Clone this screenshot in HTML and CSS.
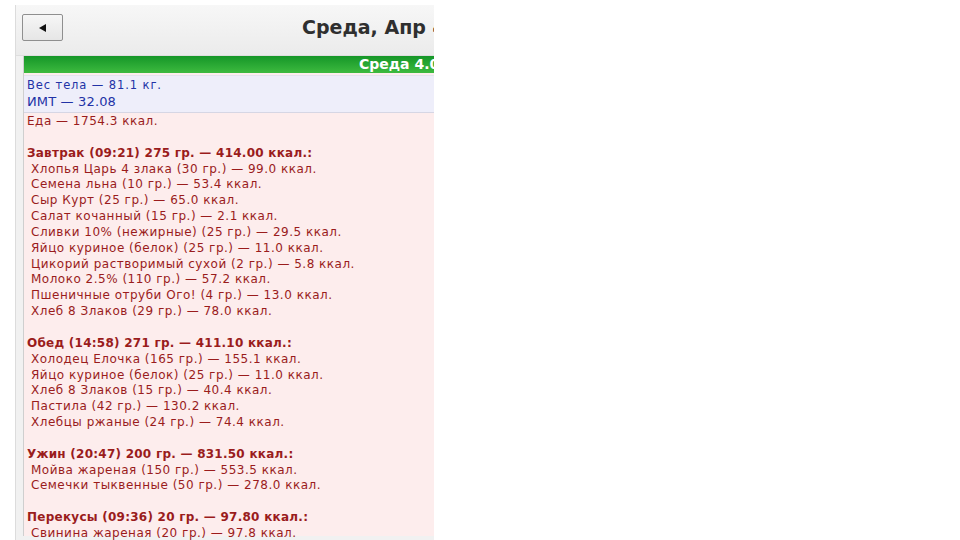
FILE: index.html
```html
<!DOCTYPE html>
<html lang="ru">
<head>
<meta charset="utf-8">
<title>Дневник питания</title>
<link rel="stylesheet" href="styles.css">
</head>
<body>
<div class="frame">
  <div class="header">
    <button class="back" type="button" aria-label="Назад"><span class="tri"></span></button>
    <h1 class="title">Среда, Апр 4, 2018</h1>
  </div>
  <div class="content">
    <div class="daybar">Среда 4.04.2018</div>
    <div class="body-info">
      <div class="weight">Вес тела — 81.1 кг.</div>
      <div class="bmi">ИМТ — 32.08</div>
    </div>
    <div class="food">
      <div class="line">Еда — 1754.3 ккал.</div>
      <div class="gap"></div>
      <div class="meal">Завтрак (09:21) 275 гр. — 414.00 ккал.:</div>
      <div class="item">Хлопья Царь 4 злака (30 гр.) — 99.0 ккал.</div>
      <div class="item">Семена льна (10 гр.) — 53.4 ккал.</div>
      <div class="item">Сыр Курт (25 гр.) — 65.0 ккал.</div>
      <div class="item">Салат кочанный (15 гр.) — 2.1 ккал.</div>
      <div class="item">Сливки 10% (нежирные) (25 гр.) — 29.5 ккал.</div>
      <div class="item">Яйцо куриное (белок) (25 гр.) — 11.0 ккал.</div>
      <div class="item">Цикорий растворимый сухой (2 гр.) — 5.8 ккал.</div>
      <div class="item">Молоко 2.5% (110 гр.) — 57.2 ккал.</div>
      <div class="item">Пшеничные отруби Ого! (4 гр.) — 13.0 ккал.</div>
      <div class="item">Хлеб 8 Злаков (29 гр.) — 78.0 ккал.</div>
      <div class="gap"></div>
      <div class="meal">Обед (14:58) 271 гр. — 411.10 ккал.:</div>
      <div class="item">Холодец Елочка (165 гр.) — 155.1 ккал.</div>
      <div class="item">Яйцо куриное (белок) (25 гр.) — 11.0 ккал.</div>
      <div class="item">Хлеб 8 Злаков (15 гр.) — 40.4 ккал.</div>
      <div class="item">Пастила (42 гр.) — 130.2 ккал.</div>
      <div class="item">Хлебцы ржаные (24 гр.) — 74.4 ккал.</div>
      <div class="gap"></div>
      <div class="meal">Ужин (20:47) 200 гр. — 831.50 ккал.:</div>
      <div class="item">Мойва жареная (150 гр.) — 553.5 ккал.</div>
      <div class="item">Семечки тыквенные (50 гр.) — 278.0 ккал.</div>
      <div class="gap"></div>
      <div class="meal">Перекусы (09:36) 20 гр. — 97.80 ккал.:</div>
      <div class="item">Свинина жареная (20 гр.) — 97.8 ккал.</div>
    </div>
  </div>
</div>
</body>
</html>
```

FILE: styles.css
```css
html, body {
  margin: 0;
  padding: 0;
  background: #ffffff;
}

body {
  font-family: "DejaVu Sans", "Liberation Sans", sans-serif;
}

.frame {
  margin: 5px 0 0 15px;
  width: 419px;
  height: 535px;
  border-left: 1px solid #dcdcdc;
  background: #f1f1f1;
  overflow: hidden;
  box-sizing: border-box;
}

.header {
  height: 51px;
  display: flex;
  align-items: flex-start;
  padding: 9px 0 0 6px;
  box-sizing: border-box;
  background: linear-gradient(#f7f7f7, #ebebeb);
  border-bottom: 1px solid #dedede;
  white-space: nowrap;
}

.back {
  width: 41px;
  height: 27px;
  margin: 0;
  padding: 0;
  border: 1px solid #8f8f8f;
  border-radius: 2px;
  background: linear-gradient(#f6f6f6, #e6e6e6);
  display: flex;
  align-items: center;
  justify-content: center;
  flex: none;
}

.tri {
  width: 0;
  height: 0;
  border-top: 4px solid transparent;
  border-bottom: 4px solid transparent;
  border-right: 7px solid #111111;
}

.title {
  margin: 0 0 0 239px;
  font-family: "DejaVu Sans", "Liberation Sans", sans-serif;
  font-size: 19px;
  font-weight: bold;
  color: #2f2f2f;
  line-height: 26px;
  flex: none;
}

.content {
  margin-left: 7px;
  border-left: 1px solid #cfcfcf;
  width: 600px;
  height: 480px;
  background: #fdeded;
}

.daybar {
  height: 17px;
  background: linear-gradient(#159628, #3dba3f);
  color: #ffffff;
  font-size: 14px;
  font-weight: bold;
  line-height: 17px;
  padding-left: 335px;
  white-space: nowrap;
}

.body-info {
  margin-top: 2px;
  padding: 2px 0 2px 3px;
  background: #eeeefa;
  border-top: 1px solid #e4e4ee;
  border-bottom: 1px solid #d6d6e4;
  color: #2232a6;
  white-space: nowrap;
}

.weight {
  font-size: 11.5px;
  letter-spacing: 0.9px;
  line-height: 15px;
}

.bmi {
  font-size: 13px;
  letter-spacing: 0.15px;
  line-height: 17px;
}

.food {
  padding: 1px 0 0 3px;
  color: #9a1c1c;
  font-size: 12px;
  letter-spacing: 0.5px;
  line-height: 15.85px;
  white-space: nowrap;
}

.gap {
  height: 15.85px;
}

.meal {
  font-weight: bold;
  letter-spacing: 0.25px;
}

.item {
  padding-left: 4px;
}
```
